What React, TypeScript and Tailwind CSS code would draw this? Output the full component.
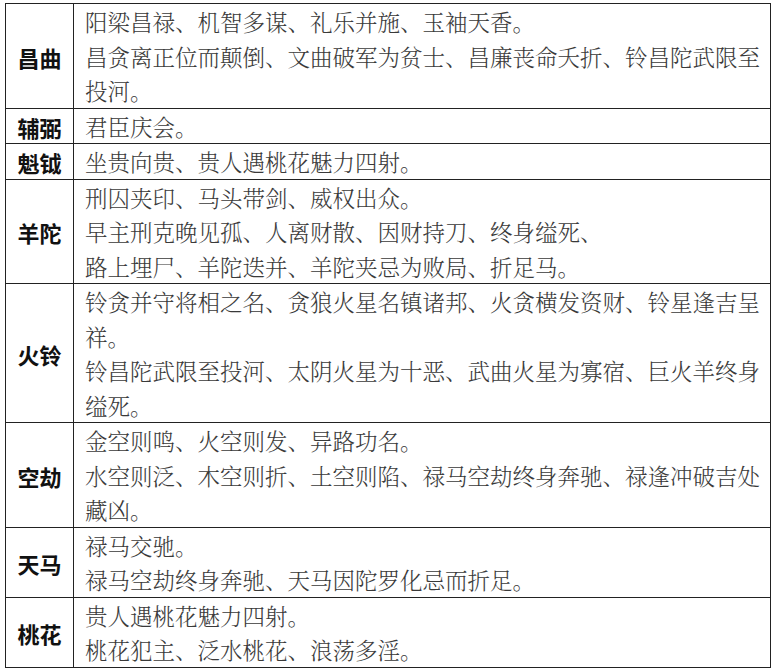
const rows = [
  {
    name: "昌曲",
    lines: [
      "阳梁昌禄、机智多谋、礼乐并施、玉袖天香。",
      "昌贪离正位而颠倒、文曲破军为贫士、昌廉丧命夭折、铃昌陀武限至",
      "投河。",
    ],
  },
  { name: "辅弼", lines: ["君臣庆会。"] },
  { name: "魁钺", lines: ["坐贵向贵、贵人遇桃花魅力四射。"] },
  {
    name: "羊陀",
    lines: [
      "刑囚夹印、马头带剑、威权出众。",
      "早主刑克晚见孤、人离财散、因财持刀、终身缢死、",
      "路上埋尸、羊陀迭并、羊陀夹忌为败局、折足马。",
    ],
  },
  {
    name: "火铃",
    lines: [
      "铃贪并守将相之名、贪狼火星名镇诸邦、火贪横发资财、铃星逢吉呈",
      "祥。",
      "铃昌陀武限至投河、太阴火星为十恶、武曲火星为寡宿、巨火羊终身",
      "缢死。",
    ],
  },
  {
    name: "空劫",
    lines: [
      "金空则鸣、火空则发、异路功名。",
      "水空则泛、木空则折、土空则陷、禄马空劫终身奔驰、禄逢冲破吉处",
      "藏凶。",
    ],
  },
  {
    name: "天马",
    lines: ["禄马交驰。", "禄马空劫终身奔驰、天马因陀罗化忌而折足。"],
  },
  {
    name: "桃花",
    lines: ["贵人遇桃花魅力四射。", "桃花犯主、泛水桃花、浪荡多淫。"],
  },
]

export default function App() {
  return (
    <div className="w-[779px] h-[672px] bg-white pt-[3px] pl-[5px] font-['Noto_Serif_CJK_SC','Noto_Sans_CJK_SC',serif]">
      <table className="w-[766px] border-collapse border border-[#222] table-fixed">
        <colgroup>
          <col className="w-[68px]" />
          <col />
        </colgroup>
        <tbody>
          {rows.map((row) => (
            <tr key={row.name} className="border border-[#222]">
              <td className="border-r border-[#222] text-center align-middle p-0 pt-[2px] text-[22px] leading-[28px] font-bold text-[#111] font-['Noto_Sans_CJK_SC',sans-serif]">
                {row.name}
              </td>
              <td className="pl-[11px] pr-1 py-0 text-[22.5px] leading-[34.5px] text-[#3a3a3a] font-light">
                {row.lines.map((line, i) => (
                  <div key={i} className="whitespace-nowrap">
                    {line}
                  </div>
                ))}
              </td>
            </tr>
          ))}
        </tbody>
      </table>
    </div>
  )
}
